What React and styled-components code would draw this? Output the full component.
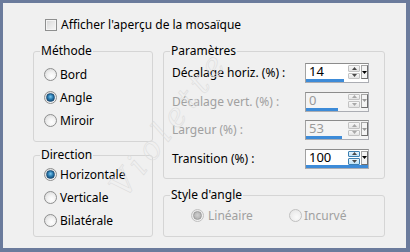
import React from 'react';
import styled, { createGlobalStyle } from 'styled-components';

const Global = createGlobalStyle`
  html, body { margin: 0; padding: 0; background: #6b7b9c; }
  body {
    font-family: "Segoe UI", "Noto Sans", "Open Sans", sans-serif;
    font-size: 12px;
    color: #000;
  }
  * { box-sizing: border-box; }
`;

const Frame = styled.div`
  position: relative;
  width: 410px;
  height: 252px;
  border-style: solid;
  border-color: #6b7b9c;
  border-width: 3px 4px 4px 3px;
  background: #f0f0f0;
  padding: 15px 21px 0 30px;
  overflow: hidden;
`;

const CheckRow = styled.label`
  display: flex;
  align-items: center;
  gap: 4px;
  height: 14px;
  padding-left: 12px;
  line-height: 14px;
`;

const CheckBox = styled.span`
  width: 12px;
  height: 12px;
  border: 1px solid #8e8f8f;
  background: linear-gradient(135deg, #d4d4d4 0%, #e8e8e8 50%, #f6f6f6 100%);
  box-shadow: inset 0 0 0 1px #f4f4f4;
`;

const Columns = styled.div`
  margin-top: 12px;
  display: grid;
  grid-template-columns: 120px 222px;
  column-gap: 10px;
  align-items: start;
`;

const Column = styled.div`
  display: flex;
  flex-direction: column;
  gap: ${p => p.$gap}px;
`;

const Group = styled.fieldset`
  margin: 0;
  padding: 0;
  min-width: 0;
  border: 1px solid #d5d5d5;
  border-radius: 3px;
`;

const Legend = styled.legend`
  margin-left: 6px;
  padding: 0 1px;
  line-height: 14px;
  font-size: 12px;
  color: #000;
`;

const Body = styled.div`
  padding: ${p => p.$pad};
  display: ${p => (p.$grid ? 'grid' : 'flex')};
  flex-direction: column;
  grid-template-columns: ${p => p.$grid || 'none'};
  row-gap: ${p => p.$gap || 0}px;
`;

const RadioRow = styled.div`
  display: flex;
  align-items: center;
  gap: ${p => p.$gap || 3}px;
  height: 23px;
  color: ${p => (p.$disabled ? '#a0a0a0' : '#000')};
`;

const RadioCircle = styled.span`
  width: 13px;
  height: 13px;
  flex: none;
  border-radius: 50%;
  border: 1px solid ${p => (p.$disabled ? '#c0c0c0' : '#8e8f8f')};
  background: ${p =>
    p.$disabled
      ? 'radial-gradient(circle at 60% 65%, #fafafa 0%, #f0f0f0 45%, #e2e2e2 100%)'
      : 'radial-gradient(circle at 60% 65%, #ffffff 0%, #f2f2f2 40%, #d2d2d2 100%)'};
  display: flex;
  align-items: center;
  justify-content: center;
  &::after {
    content: '';
    width: 7px;
    height: 7px;
    border-radius: 50%;
    display: ${p => (p.$checked ? 'block' : 'none')};
    background: ${p =>
      p.$disabled
        ? 'radial-gradient(circle at 50% 45%, #d0d0d0 0%, #a8a8a8 100%)'
        : 'radial-gradient(circle at 50% 40%, #7fcaf2 0%, #2a7bb0 45%, #0e3d63 100%)'};
    border: 1px solid ${p => (p.$disabled ? '#9c9c9c' : '#1d4f78')};
  }
`;

const ParamRow = styled.div`
  display: flex;
  align-items: center;
  height: 20px;
  color: ${p => (p.$disabled ? '#a0a0a0' : '#000')};
`;

const ParamLabel = styled.span`
  flex: 1;
  line-height: 14px;
`;

const Spin = styled.div`
  width: 64px;
  height: 20px;
  border: 1px solid #abadb3;
  border-top-color: #8c8c8c;
  border-left-color: #a2a2a2;
  background: ${p => (p.$disabled ? '#f4f4f4' : '#fff')};
  display: flex;
  flex-direction: column;
`;

const SpinTop = styled.div`
  height: 15px;
  display: flex;
  align-items: center;
  padding-left: 3px;
`;

const Value = styled.span`
  flex: 1;
  font-size: 13px;
  line-height: 15px;
  color: ${p => (p.$disabled ? '#9a9a9a' : '#000')};
`;

const Arrows = styled.div`
  width: 12px;
  height: 14px;
  margin-right: 1px;
  display: flex;
  flex-direction: column;
  gap: 1px;
  align-self: flex-start;
  margin-top: 1px;
`;

const Arrow = styled.div`
  flex: 1;
  display: flex;
  align-items: center;
  justify-content: center;
  border: 1px solid ${p => (p.$hot ? '#3c7fb1' : '#c3c3c3')};
  background: ${p =>
    p.$hot ? 'linear-gradient(#e6f4fc, #bfe2f7)' : 'linear-gradient(#f8f8f8, #e4e4e4)'};
  border-radius: 1px;
`;

const Drop = styled.div`
  width: 7px;
  height: 14px;
  margin-top: 1px;
  align-self: flex-start;
  border: 1px solid #a6a6a6;
  border-right-color: #6e6e6e;
  border-bottom-color: #6e6e6e;
  background: #f4f4f4;
  display: flex;
  align-items: center;
  justify-content: center;
`;

const Bar = styled.div`
  height: 3px;
  background: #3d8bd8;
`;

const Watermark = styled.span`
  position: absolute;
  left: 66px;
  top: 102px;
  width: 200px;
  text-align: center;
  font-family: "DejaVu Serif", serif;
  font-style: italic;
  font-size: 32px;
  line-height: 36px;
  letter-spacing: 6px;
  color: transparent;
  -webkit-text-stroke: 0.6px #dddddd;
  transform: rotate(-53deg);
  pointer-events: none;
`;

const Tri = ({ down, color }) => (
  <svg width="5" height="3" viewBox="0 0 5 3">
    <path d={down ? 'M0 0H5L2.5 3Z' : 'M0 3H5L2.5 0Z'} fill={color} />
  </svg>
);

const params = [
  { label: 'Décalage horiz. (%) :', value: '14', bar: 38 },
  { label: 'Décalage vert. (%) :', value: '0', bar: 32, disabled: true },
  { label: 'Largeur (%) :', value: '53', bar: 36, disabled: true },
  { label: 'Transition (%) :', value: '100', bar: 62, hot: true },
];

const Radio = ({ label, checked, disabled, gap }) => (
  <RadioRow $disabled={disabled} $gap={gap}>
    <RadioCircle $checked={checked} $disabled={disabled} />
    <span>{label}</span>
  </RadioRow>
);

export default function App() {
  return (
    <>
      <Global />
      <Frame>
        <CheckRow>
          <CheckBox />
          <span>Afficher l'aperçu de la mosaïque</span>
        </CheckRow>
        <Columns>
          <Column $gap={6}>
            <Group>
              <Legend>Méthode</Legend>
              <Body $pad="5px 0 9px 10px">
                <Radio label="Bord" />
                <Radio label="Angle" checked />
                <Radio label="Miroir" />
              </Body>
            </Group>
            <Group>
              <Legend>Direction</Legend>
              <Body $pad="1px 0 4px 10px">
                <Radio label="Horizontale" checked />
                <Radio label="Verticale" />
                <Radio label="Bilatérale" />
              </Body>
            </Group>
          </Column>
          <Column $gap={9}>
            <Group>
              <Legend>Paramètres</Legend>
              <Body $pad="5px 15px 9.5px 8px" $gap={8.5}>
                {params.map(p => (
                  <ParamRow key={p.label} $disabled={p.disabled}>
                    <ParamLabel>{p.label}</ParamLabel>
                    <Spin $disabled={p.disabled}>
                      <SpinTop>
                        <Value $disabled={p.disabled}>{p.value}</Value>
                        <Arrows>
                          <Arrow $hot={p.hot}>
                            <Tri color={p.disabled ? '#a8a8a8' : '#4a4a4a'} />
                          </Arrow>
                          <Arrow $hot={p.hot}>
                            <Tri down color={p.disabled ? '#a8a8a8' : '#4a4a4a'} />
                          </Arrow>
                        </Arrows>
                        <Drop>
                          <Tri down color={p.disabled ? '#9a9a9a' : '#000'} />
                        </Drop>
                      </SpinTop>
                      <Bar style={{ width: p.bar }} />
                    </Spin>
                  </ParamRow>
                ))}
              </Body>
            </Group>
            <Group>
              <Legend>Style d'angle</Legend>
              <Body $pad="1.5px 0 9.5px 27px" $grid="98px auto">
                <Radio label="Linéaire" checked disabled gap={4} />
                <Radio label="Incurvé" disabled gap={2} />
              </Body>
            </Group>
          </Column>
        </Columns>
        <Watermark>Violette</Watermark>
      </Frame>
    </>
  );
}
